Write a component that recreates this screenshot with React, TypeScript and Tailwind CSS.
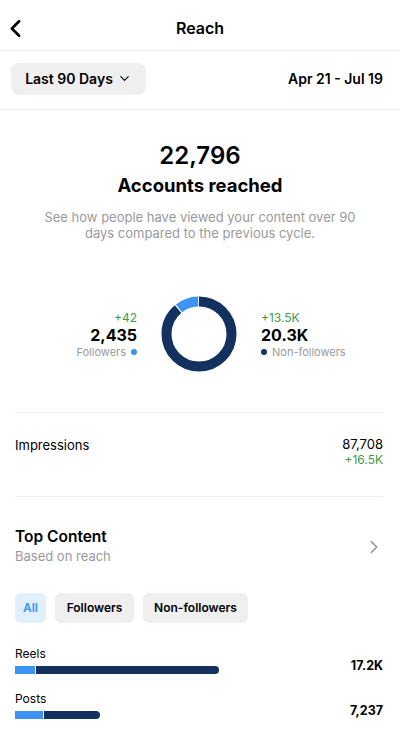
import { ChevronLeft, ChevronDown, ChevronRight } from "lucide-react";

const NAVY = "#12315f";
const BLUE = "#3d94f0";

function Donut() {
  // followers ≈ 10.7% of reach
  const r = 32.5;
  const c = 2 * Math.PI * r;
  const fol = 0.107;
  const gap = 1.2;
  return (
    <svg width="76" height="76" viewBox="0 0 76 76">
      <g transform="rotate(-90 38 38)">
        <circle
          cx="38"
          cy="38"
          r={r}
          fill="none"
          stroke={NAVY}
          strokeWidth="10"
          strokeDasharray={`${c * (1 - fol) - gap} ${c}`}
        />
        <circle
          cx="38"
          cy="38"
          r={r}
          fill="none"
          stroke={BLUE}
          strokeWidth="10"
          strokeDasharray={`${c * fol - gap} ${c}`}
          strokeDashoffset={-(c * (1 - fol))}
        />
      </g>
    </svg>
  );
}

function Bar({ light, dark }: { light: number; dark: number }) {
  return (
    <div className="flex h-[8px] items-stretch">
      <div className="bg-[#3d94f0]" style={{ width: light }} />
      <div className="w-[1px] bg-white" />
      <div className="rounded-r-full bg-[#12315f]" style={{ width: dark }} />
    </div>
  );
}

export default function App() {
  return (
    <div className="h-[733px] w-[400px] overflow-hidden bg-white text-black font-['Inter','Liberation_Sans',sans-serif]">
      {/* header */}
      <div className="relative flex h-[51px] items-center justify-center border-b border-[#efefef] pt-[5px]">
        <ChevronLeft className="absolute left-[1px] top-[14px] h-[29px] w-[29px]" strokeWidth={2.2} />
        <span className="text-[16px] font-semibold">Reach</span>
      </div>

      {/* range */}
      <div className="flex h-[59px] items-center justify-between border-b border-[#efefef] pb-[3px] pl-[11px] pr-[17px]">
        <button className="flex h-[32px] w-[135px] items-center justify-center gap-[4px] rounded-[8px] bg-[#efefef] text-[14px] font-semibold">
          Last 90 Days
          <ChevronDown className="h-[15px] w-[15px]" strokeWidth={1.8} />
        </button>
        <span className="text-[14px] font-semibold">Apr 21 - Jul 19</span>
      </div>

      {/* totals */}
      <div className="flex flex-col items-center pt-[31px]">
        <div className="text-[24px] font-semibold leading-[30px]">22,796</div>
        <div className="mt-[2px] text-[18.5px] font-bold leading-[24px]">Accounts reached</div>
        <p className="mt-[12px] w-[340px] text-center text-[13px] leading-[16px] text-[#9a9a9a]">
          See how people have viewed your content over 90 days compared to the previous cycle.
        </p>
      </div>

      {/* donut */}
      <div className="mt-[55px] flex items-center justify-center gap-[24px] pr-[2px]">
        <div className="flex w-[114px] flex-col items-end pt-[2px]">
          <span className="text-[12px] leading-[14px] text-[#3f9b49]">+42</span>
          <span className="text-[16px] font-bold leading-[20px]">2,435</span>
          <span className="flex items-center gap-[5px] text-[11px] leading-[15px] text-[#9a9a9a]">
            Followers
            <span className="h-[6px] w-[6px] rounded-full bg-[#3d94f0]" />
          </span>
        </div>
        <Donut />
        <div className="flex w-[114px] flex-col items-start pt-[2px]">
          <span className="text-[12px] leading-[14px] text-[#3f9b49]">+13.5K</span>
          <span className="text-[16px] font-bold leading-[20px]">20.3K</span>
          <span className="flex items-center gap-[5px] text-[11px] leading-[15px] text-[#9a9a9a]">
            <span className="h-[6px] w-[6px] rounded-full bg-[#12315f]" />
            Non-followers
          </span>
        </div>
      </div>

      {/* impressions */}
      <div className="ml-[15px] mr-[17px] mt-[40px] border-t border-[#f1f1f1]">
        <div className="flex justify-between pt-[23px] pb-[29px]">
          <span className="text-[13px] leading-[18px]">Impressions</span>
          <div className="flex flex-col items-end">
            <span className="text-[13px] leading-[17px]">87,708</span>
            <span className="text-[12px] leading-[14px] text-[#3f9b49]">+16.5K</span>
          </div>
        </div>
      </div>

      {/* top content */}
      <div className="ml-[15px] mr-[17px] border-t border-[#f1f1f1]">
        <div className="flex items-center justify-between pt-[30px]">
          <div className="flex flex-col">
            <span className="text-[15.5px] font-semibold leading-[20px]">Top Content</span>
            <span className="text-[13px] leading-[18px] text-[#9a9a9a]">Based on reach</span>
          </div>
          <ChevronRight className="-mr-[2px] mt-[2px] h-[22px] w-[22px] text-[#8e8e8e]" strokeWidth={1.5} />
        </div>

        <div className="mt-[28px] flex gap-[9px]">
          <button className="h-[30px] w-[31px] rounded-[6px] bg-[#e2effd] text-[12px] font-semibold text-[#3d94f0]">
            All
          </button>
          <button className="h-[30px] w-[79px] rounded-[6px] bg-[#efefef] text-[12px] font-semibold">
            Followers
          </button>
          <button className="h-[30px] w-[105px] rounded-[6px] bg-[#efefef] text-[12px] font-semibold">
            Non-followers
          </button>
        </div>

        <div className="mt-[23px] flex items-end justify-between">
          <div className="flex flex-col gap-[4px]">
            <span className="text-[12px] leading-[16px]">Reels</span>
            <Bar light={20} dark={183} />
          </div>
          <span className="text-[12.5px] font-bold leading-[16px]">17.2K</span>
        </div>

        <div className="mt-[17px] flex items-end justify-between">
          <div className="flex flex-col gap-[4px]">
            <span className="text-[12px] leading-[16px]">Posts</span>
            <Bar light={28} dark={56} />
          </div>
          <span className="text-[12.5px] font-bold leading-[16px]">7,237</span>
        </div>
      </div>
    </div>
  );
}
